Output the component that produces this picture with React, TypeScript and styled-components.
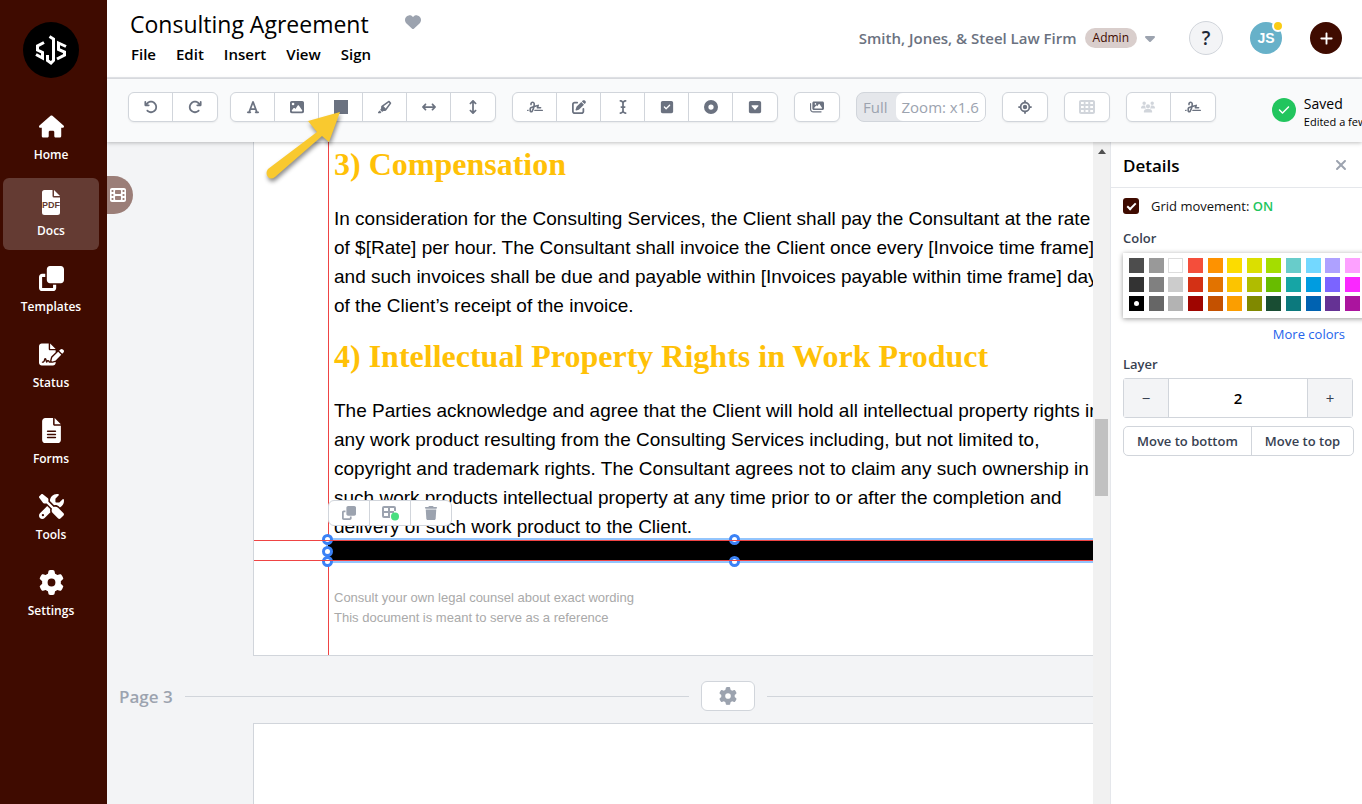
import React from "react";
import styled, { createGlobalStyle, css } from "styled-components";
import {
  FaHouse, FaClone, FaFileSignature, FaFileLines, FaScrewdriverWrench, FaGear, FaFilm, FaHeart,
  FaArrowRotateLeft, FaArrowRotateRight, FaFont, FaImage, FaHighlighter, FaArrowsLeftRight, FaArrowsUpDown,
  FaSignature, FaPenToSquare, FaICursor, FaSquareCheck, FaCircleDot, FaSquareCaretDown, FaImages,
  FaLocationCrosshairs, FaTableCells, FaUsers, FaCheck, FaTrash, FaXmark, FaPlus, FaCaretDown,
} from "react-icons/fa6";

const ui = `"Segoe UI", "Open Sans", "Noto Sans", sans-serif`;
const line = "#d1d5db";

const Global = createGlobalStyle`
  *, *::before, *::after { box-sizing: border-box; }
  body { margin: 0; font-family: ${ui}; color: #111; background: #f3f4f6; }
  button, input { font: inherit; color: inherit; }
  button { cursor: pointer; padding: 0; border: 0; background: none; }
  a { text-decoration: none; color: inherit; }
  h1, h2, p { margin: 0; }
`;

const Shell = styled.div`
  display: flex;
  height: 100vh;
  overflow: hidden;
`;

const Sidebar = styled.nav`
  flex: 0 0 107px;
  background: #3f0b00;
  padding: 22px 8px 0 3px;
  display: flex;
  flex-direction: column;
  align-items: center;
  gap: 4px;
`;

const Logo = styled.a`
  width: 56px;
  height: 56px;
  border-radius: 50%;
  background: #000;
  margin-bottom: 20px;
  svg { display: block; }
`;

const NavItem = styled.a<{ $active?: boolean }>`
  width: 96px;
  height: 72px;
  border-radius: 6px;
  display: flex;
  flex-direction: column;
  align-items: center;
  padding-top: 12px;
  gap: 7px;
  color: #fff;
  font-size: 12px;
  font-weight: 600;
  line-height: 18px;
  background: ${(p) => (p.$active ? "#643b33" : "transparent")};
  svg { display: block; height: 25px; width: auto; }
`;

const Main = styled.div`
  flex: 1;
  min-width: 0;
  display: flex;
  flex-direction: column;
`;

const Header = styled.header`
  display: flex;
  justify-content: space-between;
  height: 79px;
  flex: none;
  background: #fff;
  border-bottom: 2px solid #e5e7eb;
  padding: 8px 20px 0 23px;
`;

const TitleRow = styled.div`
  display: flex;
  gap: 36px;
  line-height: 33px;
  color: #9ca3af;
  svg { margin-top: 6px; }
`;

const DocTitle = styled.h1`
  font-size: 23px;
  font-weight: 400;
  color: #000;
`;

const Menu = styled.div`
  display: flex;
  gap: 20px;
  button { font-size: 15px; line-height: 27px; color: #000; font-weight: 600; }
  padding-left: 1px;
`;

const Account = styled.div`
  display: flex;
  align-items: center;
  height: 60px;
`;

const Firm = styled.button`
  display: flex;
  align-items: center;
  font-size: 15px;
  font-weight: 600;
  color: #6b7280;
  svg { color: #9ca3af; margin-left: 5px; }
`;

const Tag = styled.span`
  margin-left: 8px;
  border-radius: 10px;
  background: #d9cecc;
  color: #3f0b00;
  font-size: 12px;
  font-weight: 400;
  line-height: 20px;
  padding: 0 8px;
`;

const Round = styled.button<{ $kind: "help" | "user" | "add" }>`
  position: relative;
  display: flex;
  align-items: center;
  justify-content: center;
  width: 32px;
  height: 32px;
  border-radius: 50%;
  font-size: 15px;
  ${(p) => p.$kind === "help" && css`
    width: 34px; height: 34px; margin-left: 31px; font-size: 19px; font-weight: 600;
    border: 1px solid ${line}; background: #f3f4f6; color: #1f2937;
  `}
  ${(p) => p.$kind === "user" && css`
    margin-left: 27px; background: #67b1c9; color: #fff;
    font: 700 14px "Liberation Sans", sans-serif;
  `}
  ${(p) => p.$kind === "add" && css`margin-left: 28px; background: #3f0b00; color: #fff;`}
`;

const Presence = styled.span`
  position: absolute;
  top: -2px;
  right: -2px;
  width: 12px;
  height: 12px;
  border-radius: 50%;
  border: 2px solid #fff;
  background: #facc15;
`;

const Toolbar = styled.div`
  position: relative;
  z-index: 2;
  flex: none;
  display: flex;
  align-items: center;
  height: 63px;
  background: #f9fafb;
  padding: 0 0 8px 21px;
  gap: 16px;
  box-shadow: 0 1px 4px rgba(0, 0, 0, 0.25);
  overflow: hidden;
  white-space: nowrap;
`;

const EditTools = styled.div`
  display: flex;
  flex: none;
  gap: 12px;
`;

const Group = styled.div`
  display: flex;
  flex: none;
  border: 1px solid ${line};
  border-radius: 6px;
  background: #fff;
  box-shadow: 0 1px 2px rgba(0, 0, 0, 0.06);
`;

const Tool = styled.button<{ $muted?: boolean; $wide?: boolean }>`
  width: 44px;
  height: 28px;
  display: flex;
  align-items: center;
  justify-content: center;
  color: ${(p) => (p.$muted ? "#d1d5db" : "#6b7280")};
  svg { height: ${(p) => (p.$wide ? 16 : 14)}px; width: auto; }
  &:first-child:not(:last-child) { width: 43px; }
  &:last-child:not(:first-child) { width: 45px; }
  & + & { border-left: 1px solid ${line}; }
`;

const Zoom = styled(Group)`
  background: #e5e7eb;
  font-size: 15px;
  line-height: 28px;
  color: #9ca3af;
  box-shadow: none;
  border-radius: 8px;
  button:first-child { padding: 0 8px 0 6px; }
  button:last-child { padding: 0 6px; background: #fff; border-radius: 7px; }
`;

const Saved = styled.div`
  display: flex;
  align-items: flex-start;
  gap: 8px;
  flex: none;
  margin-left: 40px;
  padding-top: 12px;
  p { font-size: 14px; line-height: 18px; color: #000; }
  p + p { font-size: 11px; }
`;

const Check = styled.span`
  display: flex;
  align-items: center;
  justify-content: center;
  width: 24px;
  height: 24px;
  margin-top: 3px;
  border-radius: 50%;
  background: #22c55e;
  color: #fff;
`;

const Body = styled.div`
  flex: 1;
  min-height: 0;
  display: flex;
`;

const Viewport = styled.main`
  flex: 1;
  min-width: 0;
  overflow: hidden;
  white-space: nowrap;
  background: #f3f4f6;
`;

const Sheet = styled.section`
  position: relative;
  margin-left: 146px;
  width: 963px;
  background: #fff;
  border: 1px solid ${line};
`;

const FirstSheet = styled(Sheet)`
  border-top: 0;
  padding: 3px 0 27px 80px;
`;

const NextSheet = styled(Sheet)`
  height: 400px;
`;

const Heading = styled.h2`
  font: 700 32px/38px "Liberation Serif", "Times New Roman", serif;
  color: #ffc107;
`;

const Clause = styled.p`
  font: 400 19px/29px "Liberation Sans", Arial, sans-serif;
  color: #000;
  padding: 21px 0 17px;
`;

const Note = styled.p`
  font: 400 13px/20px "Liberation Sans", Arial, sans-serif;
  color: #a9a9a9;
`;

const Redaction = styled.div`
  position: relative;
  height: 21px;
  margin: -18px 73px 27px -6px;
  background: #000;
  box-shadow: 0 0 0 2px #93c5fd;
`;

const Guide = styled.span<{ $at: "left" | "top" | "bottom" }>`
  position: absolute;
  background: #ef4444;
  ${(p) => p.$at === "left" && css`top: 0; bottom: 0; left: 74px; width: 1px;`}
  ${(p) => p.$at === "top" && css`left: -74px; right: -74px; top: 0; height: 1px;`}
  ${(p) => p.$at === "bottom" && css`left: -74px; right: -74px; bottom: 0; height: 1px;`}
`;

const Handle = styled.span<{ $x: string; $y: string }>`
  position: absolute;
  left: ${(p) => p.$x};
  top: ${(p) => p.$y};
  width: 11px;
  height: 11px;
  margin: -5px 0 0 -6px;
  border: 3px solid #3b82f6;
  border-radius: 50%;
  background: #fff;
`;

const ItemTools = styled.div`
  position: absolute;
  left: 0;
  top: -40px;
  display: flex;
  border: 1px solid ${line};
  border-radius: 6px;
  background: #fff;
  button {
    width: 41px;
    height: 24px;
    display: flex;
    align-items: center;
    justify-content: center;
    color: #9ca3af;
  }
  button:first-child { width: 40px; }
  button + button { border-left: 1px solid ${line}; }
`;

const PageBreak = styled.div`
  display: flex;
  align-items: center;
  gap: 12px;
  width: 1165px;
  height: 67px;
  padding: 13px 0 0 12px;
  font-size: 17px;
  font-weight: 600;
  color: #9ca3af;
  hr { flex: 1; border: 0; border-top: 1px solid ${line}; margin: 0; }
  button {
    width: 54px;
    height: 30px;
    border: 1px solid ${line};
    border-radius: 6px;
    background: #fff;
    display: flex;
    align-items: center;
    justify-content: center;
  }
`;

const Scrollbar = styled.div`
  flex: 0 0 18px;
  background: #f1f1f1;
  display: flex;
  flex-direction: column;
  align-items: center;
  padding-top: 7px;
  border-right: 1px solid #e5e7eb;
`;

const Thumb = styled.span`
  width: 13px;
  height: 77px;
  margin-top: 265px;
  background: #c1c1c1;
`;

const Panel = styled.aside`
  flex: 0 0 251px;
  background: #fff;
  overflow: hidden;
  font-size: 13px;
`;

const PanelHead = styled.div`
  display: flex;
  justify-content: space-between;
  align-items: center;
  height: 46px;
  padding: 1px 13px 0 12px;
  border-bottom: 1px solid #e5e7eb;
  h2 { font-size: 17px; font-weight: 600; color: #000; }
  button { color: #9ca3af; display: flex; }
`;

const PanelBody = styled.div`
  padding: 8px 9px 0 12px;
  display: flex;
  flex-direction: column;
`;

const Toggle = styled.label`
  display: flex;
  align-items: center;
  gap: 12px;
  line-height: 20px;
  margin-bottom: 12px;
  b { font-weight: 600; color: #22c55e; }
  input {
    appearance: none;
    width: 16px;
    height: 16px;
    margin: 0;
    border-radius: 3px;
    background: #3f0b00;
    display: grid;
    place-items: center;
  }
  input:checked::after {
    content: "";
    width: 9px;
    height: 5px;
    border: solid #fff;
    border-width: 0 0 2px 2px;
    transform: translateY(-1px) rotate(-45deg);
  }
`;

const FieldLabel = styled.label`
  font-weight: 600;
  line-height: 20px;
  color: #374151;
`;

const Palette = styled.div`
  display: grid;
  grid-template-columns: repeat(12, 15px);
  justify-content: space-between;
  row-gap: 4px;
  width: 243px;
  margin-top: 5px;
  padding: 5px 6px 7px;
  background: #fff;
  box-shadow: 0 1px 5px rgba(0, 0, 0, 0.4);
`;

const Swatch = styled.button<{ $color: string; $chosen: boolean }>`
  width: 15px;
  height: 15px;
  display: grid;
  place-items: center;
  background: ${(p) => p.$color};
  ${(p) => p.$color === "#fff" && css`box-shadow: inset 0 0 0 1px #ddd;`}
  ${(p) => p.$chosen && css`
    &::after { content: ""; width: 5px; height: 5px; border-radius: 50%; background: #fff; }
  `}
`;

const More = styled.a`
  align-self: flex-end;
  margin: 6px 8px 10px 0;
  line-height: 20px;
  color: #2563eb;
`;

const Stepper = styled.div`
  display: flex;
  width: 230px;
  height: 40px;
  margin: 4px 0 8px;
  border: 1px solid ${line};
  border-radius: 3px;
  button { flex: 0 0 44px; background: #f3f4f6; font-size: 15px; color: #374151; }
  input {
    flex: 1;
    min-width: 0;
    border: solid ${line};
    border-width: 0 1px;
    text-align: center;
    font-size: 15px;
    font-weight: 600;
    color: #000;
    padding: 0;
  }
`;

const Moves = styled.div`
  display: flex;
  align-self: flex-start;
  border: 1px solid ${line};
  border-radius: 5px;
  button { height: 28px; padding: 0 13px; font-weight: 600; color: #374151; white-space: nowrap; }
  button + button { border-left: 1px solid ${line}; }
`;

const Drawer = styled.button`
  position: absolute;
  left: 107px;
  top: 176px;
  z-index: 3;
  width: 26px;
  height: 38px;
  border-radius: 0 19px 19px 0;
  background: #9b7e78;
  color: #fff;
  display: flex;
  align-items: center;
  padding-left: 3px;
`;

const Arrow = styled.svg`
  position: absolute;
  left: 256px;
  top: 98px;
  z-index: 4;
  filter: drop-shadow(1px 3px 2px rgba(0, 0, 0, 0.45));
  pointer-events: none;
`;

const colors = [
  "#4d4d4d", "#999999", "#fff", "#f44e3b", "#fe9200", "#fcdc00", "#dbdf00", "#a4dd00", "#68ccca", "#73d8ff", "#aea1ff", "#fda1ff",
  "#333333", "#808080", "#cccccc", "#d33115", "#e27300", "#fcc400", "#b0bc00", "#68bc00", "#16a5a5", "#009ce0", "#7b64ff", "#fa28ff",
  "#000000", "#666666", "#b3b3b3", "#9f0500", "#c45100", "#fb9e00", "#808900", "#194d33", "#0c797d", "#0062b1", "#653294", "#ab149e",
];

const PdfText = styled.text`
  font: 700 9px "Liberation Sans Narrow", "Liberation Sans", sans-serif;
  fill: #643b33;
`;

const PdfIcon = () => (
  <svg width="18" height="25" viewBox="0 0 18 25" fill="currentColor">
    <path d="M2.500 0H10.500V6a1.500 1.500 0 0 0 1.500 1.500H18V22.500A2.500 2.500 0 0 1 15.500 25H2.500A2.500 2.500 0 0 1 0 22.500V2.500A2.500 2.500 0 0 1 2.500 0z" />
    <path d="M12 0L18 6H12z" />
    <PdfText x="9" y="18" textAnchor="middle">PDF</PdfText>
  </svg>
);

const SquareIcon = () => <svg width="14" height="14" viewBox="0 0 14 14"><rect width="14" height="14" fill="currentColor" /></svg>;

const TableDot = () => (
  <svg width="18" height="16" viewBox="0 0 18 16" fill="none" stroke="currentColor" strokeWidth="2">
    <path d="M14 6V3a1 1 0 0 0-1-1H3a1 1 0 0 0-1 1v8a1 1 0 0 0 1 1h6M2 7h11M8 2v10" />
    <circle cx="14" cy="11.500" r="4" fill="#4ade80" stroke="none" />
  </svg>
);

const nav = [
  { label: "Home", icon: <FaHouse /> },
  { label: "Docs", icon: <PdfIcon />, active: true },
  { label: "Templates", icon: <FaClone /> },
  { label: "Status", icon: <FaFileSignature /> },
  { label: "Forms", icon: <FaFileLines /> },
  { label: "Tools", icon: <FaScrewdriverWrench /> },
  { label: "Settings", icon: <FaGear /> },
];

export default function App() {
  return (
    <Shell>
      <Global />
      <Sidebar>
        <Logo href="#" aria-label="SJS">
          <svg width="56" height="56" viewBox="0 0 56 56" fill="none" stroke="#fff" strokeWidth="3">
            <path d="M21 20.500L14.500 24V28L19.500 30.500V36L13 32.500" />
            <path d="M26.500 14.500L30.500 17V38.500L28 41L24.500 38.500V33" />
            <path d="M43 24.500L35.500 21V27.500L41.500 30V33L34 37" />
          </svg>
        </Logo>
        {nav.map((n) => (
          <NavItem href="#" key={n.label} $active={n.active}>{n.icon}{n.label}</NavItem>
        ))}
      </Sidebar>
      <Main>
        <Header>
          <div>
            <TitleRow><DocTitle>Consulting Agreement</DocTitle><FaHeart size={16} /></TitleRow>
            <Menu>{["File", "Edit", "Insert", "View", "Sign"].map((m) => <button key={m}>{m}</button>)}</Menu>
          </div>
          <Account>
            <Firm>Smith, Jones, &amp; Steel Law Firm<Tag>Admin</Tag><FaCaretDown size={16} /></Firm>
            <Round $kind="help" aria-label="Help">?</Round>
            <Round $kind="user">JS<Presence /></Round>
            <Round $kind="add" aria-label="Add"><FaPlus size={15} /></Round>
          </Account>
        </Header>
        <Toolbar>
          <EditTools>
            <Group><Tool><FaArrowRotateLeft /></Tool><Tool><FaArrowRotateRight /></Tool></Group>
            <Group>
              <Tool><FaFont /></Tool><Tool><FaImage /></Tool><Tool><SquareIcon /></Tool>
              <Tool><FaHighlighter /></Tool><Tool><FaArrowsLeftRight /></Tool><Tool><FaArrowsUpDown /></Tool>
            </Group>
          </EditTools>
          <Group>
            <Tool $wide><FaSignature /></Tool><Tool><FaPenToSquare /></Tool><Tool><FaICursor /></Tool>
            <Tool><FaSquareCheck /></Tool><Tool><FaCircleDot /></Tool><Tool><FaSquareCaretDown /></Tool>
          </Group>
          <Group><Tool><FaImages /></Tool></Group>
          <Zoom><button>Full</button><button>Zoom: x1.6</button></Zoom>
          <Group><Tool><FaLocationCrosshairs /></Tool></Group>
          <Group><Tool $muted $wide><FaTableCells /></Tool></Group>
          <Group><Tool $muted><FaUsers /></Tool><Tool $wide><FaSignature /></Tool></Group>
          <Saved><Check><FaCheck size={12} /></Check><div><p>Saved</p><p>Edited a few seconds ago</p></div></Saved>
        </Toolbar>
        <Body>
          <Viewport>
            <FirstSheet>
              <Guide $at="left" />
              <Heading>3) Compensation</Heading>
              <Clause>
                In consideration for the Consulting Services, the Client shall pay the Consultant at the rate<br />
                of $[Rate] per hour. The Consultant shall invoice the Client once every [Invoice time frame]<br />
                and such invoices shall be due and payable within [Invoices payable within time frame] days<br />
                of the Client’s receipt of the invoice.
              </Clause>
              <Heading>4) Intellectual Property Rights in Work Product</Heading>
              <Clause>
                The Parties acknowledge and agree that the Client will hold all intellectual property rights in<br />
                any work product resulting from the Consulting Services including, but not limited to,<br />
                copyright and trademark rights. The Consultant agrees not to claim any such ownership in<br />
                such work products intellectual property at any time prior to or after the completion and<br />
                delivery of such work product to the Client.
              </Clause>
              <Redaction>
                <Handle $x="0%" $y="-1px" /><Handle $x="0%" $y="50%" /><Handle $x="0%" $y="100%" />
                <Handle $x="50%" $y="-1px" /><Handle $x="50%" $y="100%" />
                <Guide $at="top" /><Guide $at="bottom" />
                <ItemTools>
                  <button aria-label="Duplicate"><FaClone size={14} /></button>
                  <button aria-label="Add to grid"><TableDot /></button>
                  <button aria-label="Delete"><FaTrash size={14} /></button>
                </ItemTools>
              </Redaction>
              <Note>Consult your own legal counsel about exact wording</Note>
              <Note>This document is meant to serve as a reference</Note>
            </FirstSheet>
            <PageBreak><span>Page 3</span><hr /><button aria-label="Page settings"><FaGear size={18} /></button><hr /></PageBreak>
            <NextSheet />
          </Viewport>
          <Scrollbar>
            <svg width="8" height="5"><path d="M0 5L4 0l4 5z" fill="#505050" /></svg>
            <Thumb />
          </Scrollbar>
          <Panel>
            <PanelHead><h2>Details</h2><button aria-label="Close"><FaXmark size={16} /></button></PanelHead>
            <PanelBody>
              <Toggle><input type="checkbox" defaultChecked /><span>Grid movement: <b>ON</b></span></Toggle>
              <FieldLabel as="span">Color</FieldLabel>
              <Palette>
                {colors.map((c) => <Swatch key={c} $color={c} $chosen={c === "#000000"} aria-label={c} />)}
              </Palette>
              <More href="#">More colors</More>
              <FieldLabel htmlFor="layer">Layer</FieldLabel>
              <Stepper><button>−</button><input id="layer" defaultValue="2" /><button>+</button></Stepper>
              <Moves><button>Move to bottom</button><button>Move to top</button></Moves>
            </PanelBody>
          </Panel>
        </Body>
      </Main>
      <Drawer aria-label="Pages"><FaFilm size={16} /></Drawer>
      <Arrow width="100" height="90" viewBox="0 0 100 90">
        <path d="M12 71L61 34L52 23L84 14L73 44L66 38L19 79Q15 82 12 79Q9 75 12 71z" fill="#f9c92f" />
      </Arrow>
    </Shell>
  );
}
